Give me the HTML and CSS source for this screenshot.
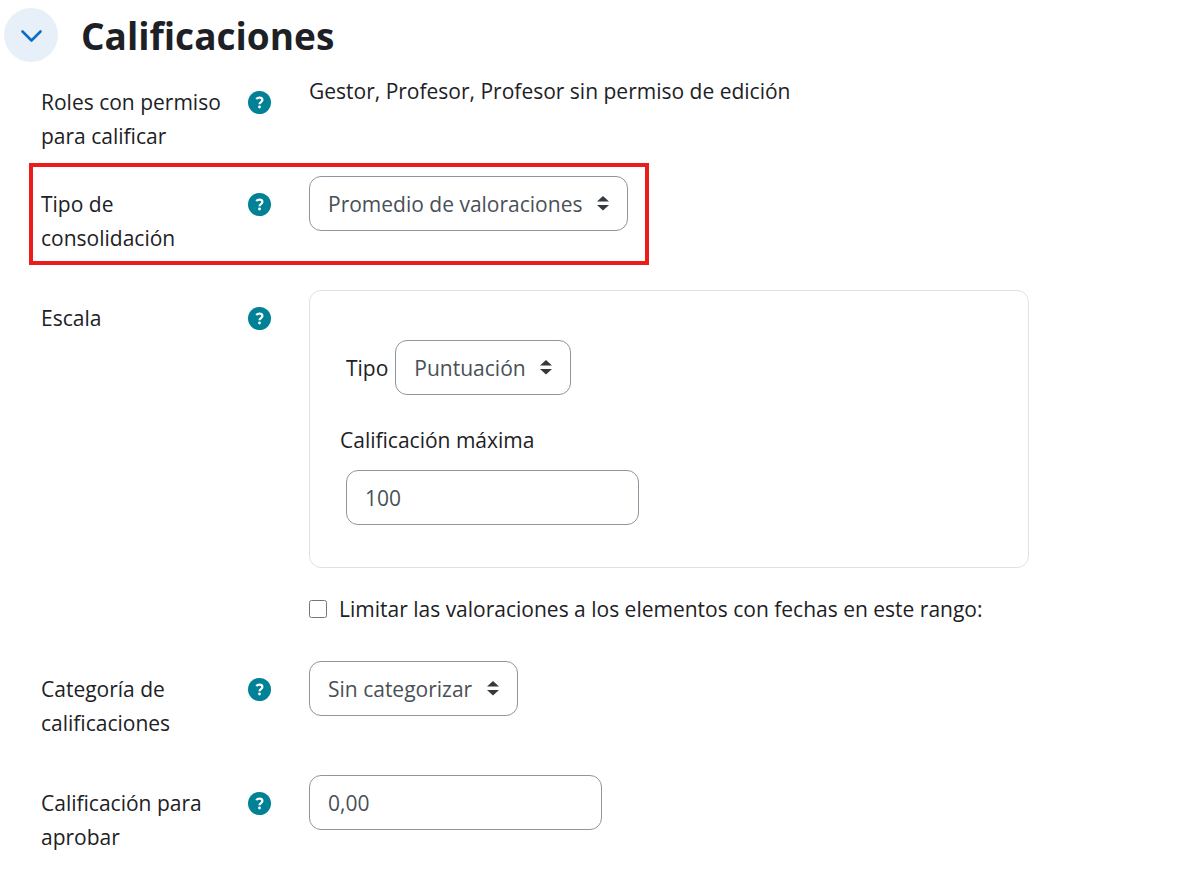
FILE: index.html
```html
<!DOCTYPE html>
<html lang="es">
<head>
    <meta charset="UTF-8">
    <meta name="viewport" content="width=device-width, initial-scale=1.0">
    <title>Calificaciones</title>
    <link rel="stylesheet" href="styles.css">
</head>
<body>
<svg class="sprite" aria-hidden="true">
    <symbol id="icon-help" viewBox="0 0 23 23">
        <circle cx="11.500" cy="11.500" r="11.500" fill="#008196"/>
        <path d="M8.300 8.200C9 7.200 10.100 6.700 11.400 6.700c1.800 0 3 .9 3 2.300 0 2.200-2.900 2.100-2.900 4.300" fill="none" stroke="#fff" stroke-width="2.200"/>
        <circle cx="11.500" cy="16" r="1.400" fill="#fff"/>
    </symbol>
    <symbol id="icon-sort" viewBox="0 0 12 16">
        <path fill="#343a40" d="M6 1l6 5.500H0zM6 15.500L12 10H0z"/>
    </symbol>
</svg>

<form class="settings">
    <div class="section-header">
        <button type="button" class="toggle" aria-label="Contraer" aria-expanded="true">
            <svg width="24" height="16" viewBox="0 0 24 16"><path d="M3.500 4.500l9 9 9-9" fill="none" stroke="#0f6cbf" stroke-width="2.600" stroke-linecap="round" stroke-linejoin="round"/></svg>
        </button>
        <h1>Calificaciones</h1>
    </div>

    <div class="row compact">
        <span class="label">Roles con permiso para calificar</span>
        <button type="button" class="help" aria-label="Ayuda"><svg><use href="#icon-help"/></svg></button>
        <div class="field">Gestor, Profesor, Profesor sin permiso de edición</div>
    </div>

    <div class="row highlighted">
        <label class="label" for="aggregate">Tipo de consolidación</label>
        <button type="button" class="help" aria-label="Ayuda"><svg><use href="#icon-help"/></svg></button>
        <div class="field">
            <span class="select-wrap">
                <select id="aggregate"><option>Promedio de valoraciones</option></select>
                <svg class="arrows"><use href="#icon-sort"/></svg>
            </span>
        </div>
    </div>

    <div class="row scale-row">
        <span class="label">Escala</span>
        <button type="button" class="help" aria-label="Ayuda"><svg><use href="#icon-help"/></svg></button>
        <div class="field">
            <div class="panel">
                <div class="type-line">
                    <label for="scale-type">Tipo</label>
                    <span class="select-wrap">
                        <select id="scale-type"><option>Puntuación</option></select>
                        <svg class="arrows"><use href="#icon-sort"/></svg>
                    </span>
                </div>
                <label class="max-label" for="max-grade">Calificación máxima</label>
                <div class="max-line"><input type="text" id="max-grade" value="100"></div>
            </div>
        </div>
    </div>

    <div class="row">
        <div class="field check-line">
            <input type="checkbox" id="limit">
            <label for="limit">Limitar las valoraciones a los elementos con fechas en este rango:</label>
        </div>
    </div>

    <div class="row">
        <label class="label" for="category">Categoría de calificaciones</label>
        <button type="button" class="help" aria-label="Ayuda"><svg><use href="#icon-help"/></svg></button>
        <div class="field">
            <span class="select-wrap">
                <select id="category"><option>Sin categorizar</option></select>
                <svg class="arrows"><use href="#icon-sort"/></svg>
            </span>
        </div>
    </div>

    <div class="row">
        <label class="label" for="pass-grade">Calificación para aprobar</label>
        <button type="button" class="help" aria-label="Ayuda"><svg><use href="#icon-help"/></svg></button>
        <div class="field"><input type="text" id="pass-grade" value="0,00"></div>
    </div>
</form>
</body>
</html>
```

FILE: styles.css
```css
*,
*::after {
    box-sizing: border-box;
}

body {
    margin: 0;
    background-color: #fff;
    color: #1d2125;
    font-family: "Segoe UI", "Open Sans", "Noto Sans", sans-serif;
    font-size: 21px;
    line-height: 34px;
}

.sprite {
    display: none;
}

.settings {
    padding: 8px 4px;
}

.section-header {
    display: flex;
    align-items: center;
    gap: 23px;
    margin-bottom: 12px;
}

.toggle {
    display: flex;
    align-items: center;
    justify-content: center;
    width: 54px;
    height: 54px;
    padding: 0;
    border: none;
    border-radius: 50%;
    background-color: #e7f0f9;
    cursor: pointer;
}

h1 {
    margin: 0;
    padding-top: 2px;
    font-size: 37px;
    line-height: 44px;
    font-weight: 700;
}

.row {
    position: relative;
    display: grid;
    grid-template-columns: 207px 61px 1fr;
    align-items: start;
    margin-bottom: 24px;
    padding-left: 37px;
}

.row.compact {
    margin-bottom: 12px;
}

.label {
    padding: 11px 16px 11px 0;
}

.help {
    display: flex;
    width: 23px;
    height: 23px;
    margin-top: 17px;
    padding: 0;
    border: none;
    background: none;
    cursor: pointer;
}

.help svg {
    width: 23px;
    height: 23px;
}

.field {
    grid-column: 3;
    max-width: 720px;
}

/* red frame around the aggregation setting */
.highlighted::after {
    content: "";
    position: absolute;
    top: -13px;
    left: 25px;
    width: 620px;
    height: 102px;
    border: 4px solid #ec1c1c;
    pointer-events: none;
}

.select-wrap {
    position: relative;
    display: inline-flex;
}

select,
input[type="text"] {
    height: 55px;
    margin: 0;
    border: 1px solid #8f959e;
    border-radius: 12px;
    background-color: #fff;
    color: #495057;
    font-family: inherit;
    font-size: 21px;
}

select {
    appearance: none;
    padding: 0 44px 0 18px;
}

input[type="text"] {
    width: 293px;
    padding: 0 18px;
}

.arrows {
    position: absolute;
    top: 19px;
    right: 19px;
    width: 12px;
    height: 16px;
    pointer-events: none;
}

.panel {
    padding: 49px 30px 42px;
    border: 1px solid #dee2e6;
    border-radius: 12px;
}

.type-line {
    display: flex;
    align-items: center;
    gap: 7px;
    margin-bottom: 28px;
    padding-left: 6px;
}

.max-label {
    display: block;
    margin-bottom: 13px;
}

.max-line {
    padding-left: 6px;
}

.check-line {
    display: flex;
    align-items: center;
    gap: 12px;
    margin-bottom: 11px;
}

.check-line input {
    width: 18px;
    height: 18px;
    margin: 0;
}
```
